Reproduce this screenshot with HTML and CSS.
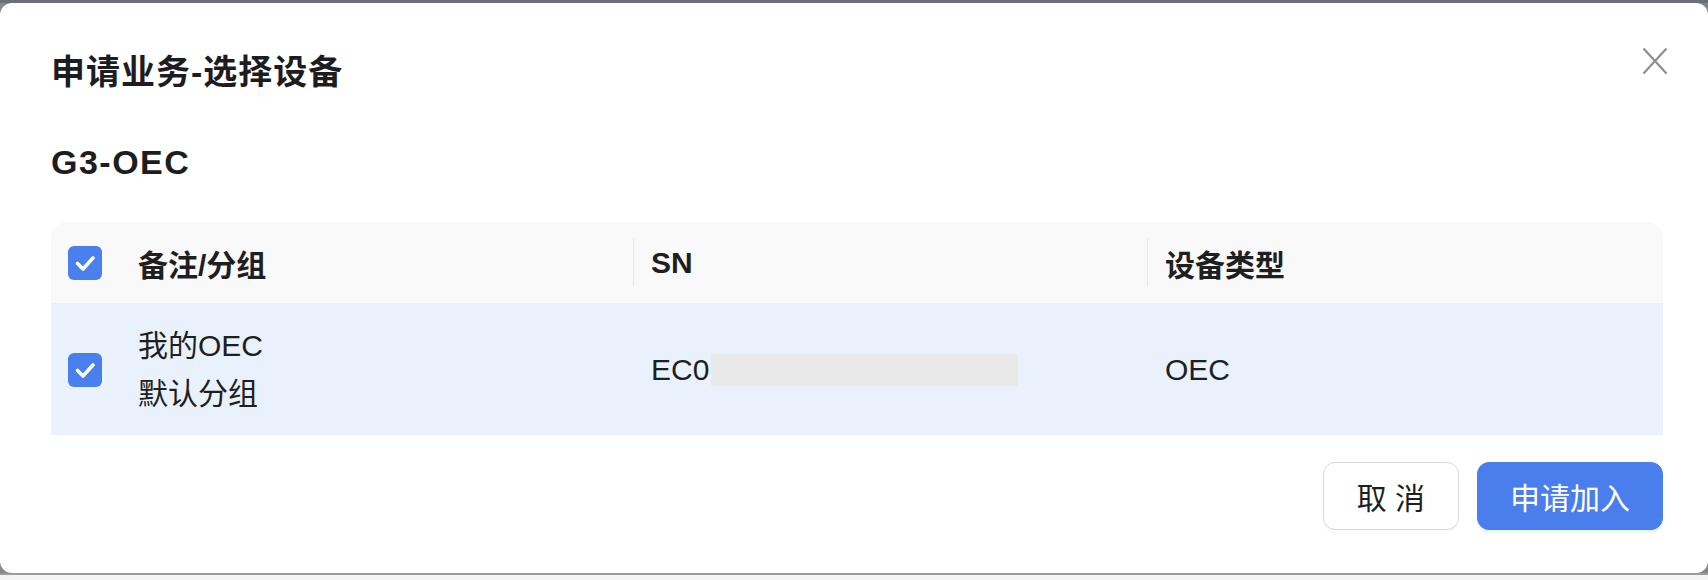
FILE: index.html
```html
<!DOCTYPE html>
<html lang="zh-CN">
<head>
<meta charset="utf-8">
<title>申请业务-选择设备</title>
<link rel="stylesheet" href="styles.css">
</head>
<body>
<div class="backdrop-strip"></div>
<div class="modal">
  <h1 class="modal-title">申请业务-选择设备</h1>
  <button class="close-btn" aria-label="关闭">
    <svg width="26" height="28" viewBox="0 0 26 28"><path d="M1.5 1.5 L24.5 26.5 M24.5 1.5 L1.5 26.5" stroke="#8e8e8e" stroke-width="2.2" fill="none"/></svg>
  </button>
  <h2 class="group-title">G3-OEC</h2>
  <div class="table">
    <div class="thead">
      <div class="cell cell-check">
        <span class="checkbox"><svg width="34" height="34" viewBox="0 0 34 34"><rect width="34" height="34" rx="6" fill="#4a7fee"/><path d="M9.5 17.5 L15 23 L25 12" stroke="#fff" stroke-width="3.6" fill="none" stroke-linecap="round" stroke-linejoin="round"/></svg></span>
      </div>
      <div class="cell">备注/分组</div>
      <div class="cell sep">SN</div>
      <div class="cell sep">设备类型</div>
    </div>
    <div class="trow">
      <div class="cell cell-check check-body">
        <span class="checkbox"><svg width="34" height="34" viewBox="0 0 34 34"><rect width="34" height="34" rx="6" fill="#4a7fee"/><path d="M9.5 17.5 L15 23 L25 12" stroke="#fff" stroke-width="3.6" fill="none" stroke-linecap="round" stroke-linejoin="round"/></svg></span>
      </div>
      <div class="cell stack"><span>我的OEC</span><span>默认分组</span></div>
      <div class="cell"><span>EC0</span><span class="redact"></span></div>
      <div class="cell">OEC</div>
    </div>
  </div>
  <div class="footer">
    <button class="btn">取 消</button>
    <button class="btn primary">申请加入</button>
  </div>
</div>
<div class="bottom-line"></div>
<div class="bottom-strip"></div>
</body>
</html>
```

FILE: styles.css
```css
* { box-sizing: border-box; }
html, body { margin: 0; padding: 0; }
body {
  width: 1708px;
  height: 580px;
  background: #85878b;
  font-family: "Liberation Sans", "Noto Sans CJK SC", sans-serif;
  color: #1f1f1f;
  overflow: hidden;
}
.backdrop-strip {
  height: 3px;
  background: #6c6f75;
}
.modal {
  position: relative;
  height: 570px;
  background: #fff;
  border-radius: 12px;
  padding: 47px 45px 43px 51px;
  display: flex;
  flex-direction: column;
}
.bottom-line {
  height: 2px;
  background: #9b9b9b;
}
.bottom-strip {
  height: 5px;
  background: #f4f4f4;
}
.modal-title {
  margin: 0;
  font-size: 34px;
  line-height: 44px;
  font-weight: 700;
  letter-spacing: 1px;
  color: #1d1d1f;
}
.close-btn {
  position: absolute;
  top: 44px;
  right: 40px;
  padding: 0;
  border: 0;
  background: none;
  line-height: 0;
}
.group-title {
  margin: 46px 0 0;
  font-size: 34px;
  line-height: 44px;
  font-weight: 700;
  letter-spacing: 1.5px;
  color: #1d1d1f;
}
.table {
  margin-top: 38px;
  border-radius: 16px 16px 0 0;
  overflow: hidden;
}
.thead, .trow {
  display: grid;
  grid-template-columns: 69px 513px 514px 1fr;
}
.thead {
  height: 82px;
  background: #f9f9f9;
  border-bottom: 1px solid #efefef;
  font-weight: 700;
}
.trow {
  height: 131px;
  background: #e9f1fc;
}
.cell {
  position: relative;
  display: flex;
  align-items: center;
  padding-left: 18px;
  font-size: 30px;
}
.cell.sep::before {
  content: "";
  position: absolute;
  left: 0;
  top: 16px;
  height: 48px;
  width: 1px;
  background: #e8e8e8;
}
.cell-check { padding-left: 17px; }
.check-body { background: #eaf2fd; }
.checkbox { display: block; width: 34px; height: 34px; line-height: 0; }
.stack {
  flex-direction: column;
  align-items: flex-start;
  justify-content: center;
  line-height: 48px;
}
.redact {
  display: inline-block;
  width: 307px;
  height: 32px;
  margin-left: 2px;
  background: #e9e9e9;
}
.footer {
  margin-top: 27px;
  display: flex;
  justify-content: flex-end;
  gap: 18px;
}
.btn {
  height: 68px;
  padding: 0 33px;
  border: 1.5px solid #d9d9d9;
  border-radius: 12px;
  background: #fff;
  font-family: "Liberation Sans", "Noto Sans CJK SC", sans-serif;
  font-size: 30px;
  color: #1f1f1f;
  box-shadow: 0 3px 0 rgba(0,0,0,0.02);
}
.btn.primary {
  background: #4a7eec;
  border-color: #4a7eec;
  color: #fff;
  padding: 0 32px;
  box-shadow: 0 3px 0 rgba(5,145,255,0.08);
}
```
